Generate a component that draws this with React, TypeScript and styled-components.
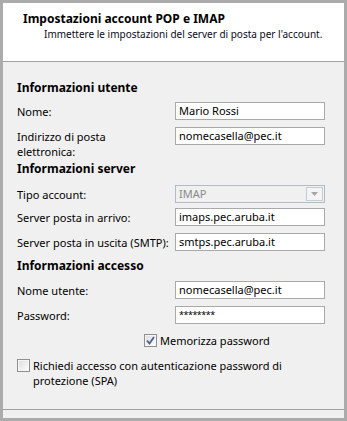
import React, { FC } from 'react';
import styled, { createGlobalStyle } from 'styled-components';

const FONT = `"Noto Sans", "Segoe UI", sans-serif`;

const GlobalStyle = createGlobalStyle`
  html, body {
    margin: 0;
    padding: 0;
    background: #ababab;
  }
  * {
    box-sizing: border-box;
  }
`;

const Window = styled.div`
  display: flex;
  flex-direction: column;
  width: 347px;
  height: 421px;
  border: 3px solid #ababab;
  background: #f0f0f0;
  font-family: ${FONT};
  font-size: 11px;
  line-height: 15px;
  color: #000;
`;

const Header = styled.div`
  display: flex;
  flex-direction: column;
  height: 59px;
  padding: 8px 0 0 20px;
  background: #ffffff;
  border-bottom: 1px solid #a0a0a0;
`;

const Title = styled.div`
  font-size: 12px;
  font-weight: 700;
`;

const Subtitle = styled.div`
  padding: 1px 0 0 21px;
  font-size: 10px;
  color: #0a0a20;
  white-space: nowrap;
`;

const Body = styled.div`
  display: flex;
  flex-direction: column;
  flex: 1;
  padding: 18px 0 0 14px;
  border-bottom: 1px solid #a0a0a0;
`;

const Footer = styled.div`
  height: 8px;
`;

const SectionTitle = styled.div<{ $top?: number }>`
  margin-top: ${(p) => p.$top ?? 0}px;
  font-size: 12px;
  font-weight: 700;
`;

const Row = styled.div<{ $top?: number }>`
  display: grid;
  grid-template-columns: 158px 150px;
  align-items: start;
  margin-top: ${(p) => p.$top ?? 0}px;
`;

const Label = styled.div`
  padding-top: 2px;
  white-space: nowrap;
`;

const Input = styled.div<{ $secret?: boolean }>`
  height: 18px;
  padding: 0 0 0 3px;
  border: 1px solid #a9a9a9;
  background: #ffffff;
  font-size: ${(p) => (p.$secret ? '9px' : '11px')};
  line-height: 16px;
  letter-spacing: ${(p) => (p.$secret ? '-0.5px' : '0')};
  white-space: nowrap;
  overflow: hidden;
`;

const Select = styled.div`
  display: flex;
  height: 18px;
  border: 1px solid #b3bcc6;
  background: #f0f0f0;
  color: #8a8a8a;
`;

const SelectValue = styled.div`
  flex: 1;
  padding-left: 3px;
  line-height: 16px;
`;

const SelectButton = styled.div`
  display: flex;
  align-items: center;
  justify-content: center;
  width: 17px;
  margin: 1px;
  border: 1px solid #c4ccd5;
  background: #f4f4f4;
`;

const CheckRow = styled.label<{ $top?: number; $indent?: number }>`
  display: flex;
  align-items: flex-start;
  gap: 3px;
  margin-top: ${(p) => p.$top ?? 0}px;
  padding-left: ${(p) => p.$indent ?? 0}px;
`;

const Box = styled.span`
  display: flex;
  align-items: center;
  justify-content: center;
  flex: none;
  width: 13px;
  height: 13px;
  margin-top: 1px;
  border: 1px solid #8e8f8f;
  background: linear-gradient(135deg, #dcdcdc 0%, #f4f4f4 70%, #ffffff 100%);
  box-shadow: inset 0 0 0 1px #f6f6f6;
`;

const Arrow: FC = () => (
  <svg width="7" height="4" viewBox="0 0 7 4">
    <path d="M0 0H7L3.5 4Z" fill="#a6a6a6" />
  </svg>
);

const Check: FC = () => (
  <svg width="9" height="9" viewBox="0 0 9 9">
    <path d="M1 4.5L3.5 7.5L8 1" stroke="#4a5f96" strokeWidth="1.8" fill="none" />
  </svg>
);

interface FieldProps {
  label: React.ReactNode;
  value: string;
  top?: number;
  secret?: boolean;
}

const Field: FC<FieldProps> = ({ label, value, top, secret }) => (
  <Row $top={top}>
    <Label>{label}</Label>
    <Input $secret={secret}>{value}</Input>
  </Row>
);

export default function App() {
  return (
    <>
      <GlobalStyle />
      <Window>
        <Header>
          <Title>Impostazioni account POP e IMAP</Title>
          <Subtitle>Immettere le impostazioni del server di posta per l'account.</Subtitle>
        </Header>

        <Body>
          <SectionTitle>Informazioni utente</SectionTitle>
          <Field top={7} label="Nome:" value="Mario Rossi" />
          <Field
            top={7}
            label={
              <>
                Indirizzo di posta
                <br />
                elettronica:
              </>
            }
            value="nomecasella@pec.it"
          />

          <SectionTitle $top={2}>Informazioni server</SectionTitle>
          <Row $top={9}>
            <Label>Tipo account:</Label>
            <Select>
              <SelectValue>IMAP</SelectValue>
              <SelectButton>
                <Arrow />
              </SelectButton>
            </Select>
          </Row>
          <Field top={5} label="Server posta in arrivo:" value="imaps.pec.aruba.it" />
          <Field top={7} label="Server posta in uscita (SMTP):" value="smtps.pec.aruba.it" />

          <SectionTitle $top={7}>Informazioni accesso</SectionTitle>
          <Field top={8} label="Nome utente:" value="nomecasella@pec.it" />
          <Field top={7} label="Password:" value="********" secret />

          <CheckRow $top={9} $indent={127}>
            <Box>
              <Check />
            </Box>
            Memorizza password
          </CheckRow>

          <CheckRow $top={10}>
            <Box />
            <span>
              Richiedi accesso con autenticazione password di
              <br />
              protezione (SPA)
            </span>
          </CheckRow>
        </Body>

        <Footer />
      </Window>
    </>
  );
}
